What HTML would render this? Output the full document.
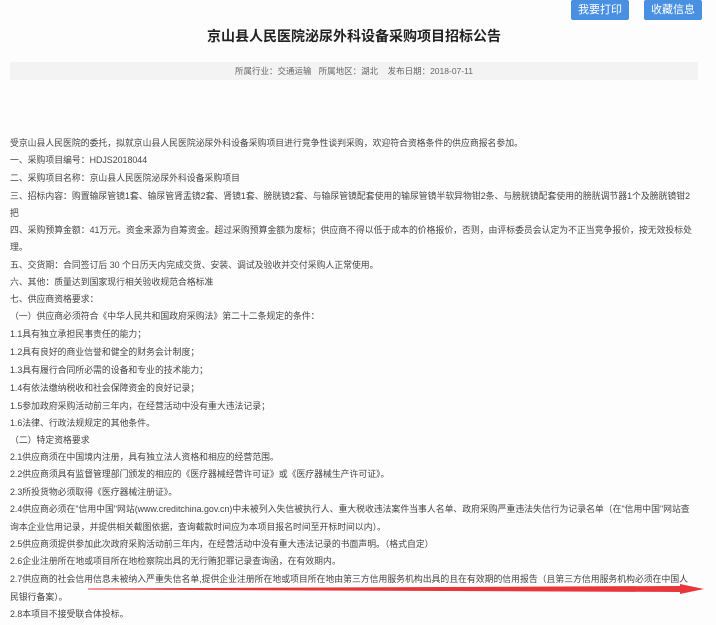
<!DOCTYPE html>
<html><head><meta charset="utf-8"><style>
body{margin:0;width:716px;height:625px;background:#fdfdfe;font-family:"Liberation Sans","Noto Sans CJK SC",sans-serif;overflow:hidden;position:relative;color:#444}
.btn{position:absolute;top:0;height:20px;width:58px;background:#4a90e2;color:#fff;font-size:11px;line-height:20px;text-align:center;border-radius:2px}
.title{position:absolute;top:26px;left:207px;width:293px;text-align:center;font-size:14px;font-weight:bold;color:#222;white-space:nowrap}
.meta{position:absolute;top:62px;left:10px;width:688px;height:18px;background:#f3f3f3;font-size:8.5px;line-height:18px;text-align:center;color:#666}
.l{position:absolute;left:10px;font-size:8.85px;line-height:12px;white-space:nowrap;color:#444}
</style></head><body>
<div class="btn" style="left:571px">我要打印</div>
<div class="btn" style="left:644px">收藏信息</div>
<div class="title">京山县人民医院泌尿外科设备采购项目招标公告</div>
<div class="meta">所属行业：交通运输&nbsp;&nbsp;&nbsp;所属地区：湖北&nbsp;&nbsp;&nbsp;&nbsp;发布日期：2018-07-11</div>
<div class="l" style="top:137px">受京山县人民医院的委托，拟就京山县人民医院泌尿外科设备采购项目进行竞争性谈判采购，欢迎符合资格条件的供应商报名参加。</div>
<div class="l" style="top:154px">一、采购项目编号：HDJS2018044</div>
<div class="l" style="top:172px">二、采购项目名称：京山县人民医院泌尿外科设备采购项目</div>
<div class="l" style="top:190px">三、招标内容：购置输尿管镜1套、输尿管肾盂镜2套、肾镜1套、膀胱镜2套、与输尿管镜配套使用的输尿管镜半软异物钳2条、与膀胱镜配套使用的膀胱调节器1个及膀胱镜钳2</div>
<div class="l" style="top:207px">把</div>
<div class="l" style="top:224px">四、采购预算金额：41万元。资金来源为自筹资金。超过采购预算金额为废标；供应商不得以低于成本的价格报价，否则，由评标委员会认定为不正当竞争报价，按无效投标处</div>
<div class="l" style="top:241px">理。</div>
<div class="l" style="top:259px">五、交货期：合同签订后 30 个日历天内完成交货、安装、调试及验收并交付采购人正常使用。</div>
<div class="l" style="top:276px">六、其他：质量达到国家现行相关验收规范合格标准</div>
<div class="l" style="top:293px">七、供应商资格要求：</div>
<div class="l" style="top:310px">（一）供应商必须符合《中华人民共和国政府采购法》第二十二条规定的条件：</div>
<div class="l" style="top:328px">1.1具有独立承担民事责任的能力；</div>
<div class="l" style="top:346px">1.2具有良好的商业信誉和健全的财务会计制度；</div>
<div class="l" style="top:364px">1.3具有履行合同所必需的设备和专业的技术能力；</div>
<div class="l" style="top:382px">1.4有依法缴纳税收和社会保障资金的良好记录；</div>
<div class="l" style="top:400px">1.5参加政府采购活动前三年内，在经营活动中没有重大违法记录；</div>
<div class="l" style="top:417px">1.6法律、行政法规规定的其他条件。</div>
<div class="l" style="top:434px">（二）特定资格要求</div>
<div class="l" style="top:451px">2.1供应商须在中国境内注册，具有独立法人资格和相应的经营范围。</div>
<div class="l" style="top:468px">2.2供应商须具有监督管理部门颁发的相应的《医疗器械经营许可证》或《医疗器械生产许可证》。</div>
<div class="l" style="top:486px">2.3所投货物必须取得《医疗器械注册证》。</div>
<div class="l" style="top:503px">2.4供应商必须在"信用中国"网站(www.creditchina.gov.cn)中未被列入失信被执行人、重大税收违法案件当事人名单、政府采购严重违法失信行为记录名单（在"信用中国"网站查</div>
<div class="l" style="top:521px">询本企业信用记录，并提供相关截图依据，查询截款时间应为本项目报名时间至开标时间以内）。</div>
<div class="l" style="top:538px">2.5供应商须提供参加此次政府采购活动前三年内，在经营活动中没有重大违法记录的书面声明。（格式自定）</div>
<div class="l" style="top:555px">2.6企业注册所在地或项目所在地检察院出具的无行贿犯罪记录查询函，在有效期内。</div>
<div class="l" style="top:573px">2.7供应商的社会信用信息未被纳入严重失信名单,提供企业注册所在地或项目所在地由第三方信用服务机构出具的且在有效期的信用报告（且第三方信用服务机构必须在中国人</div>
<div class="l" style="top:591px">民银行备案）。</div>
<div class="l" style="top:608px">2.8本项目不接受联合体投标。</div>
<svg style="position:absolute;left:0;top:0" width="716" height="625"><polygon points="88,588.5 680,586 680,584 704,589 680,594 680,592 88,589.5" fill="#e8363a"/></svg>
</body></html>
